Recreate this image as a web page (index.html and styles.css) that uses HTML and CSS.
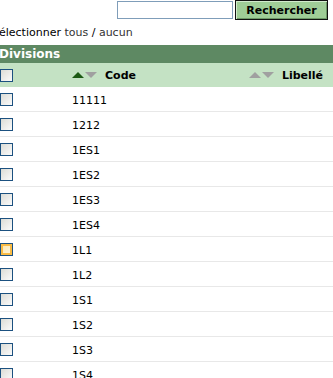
FILE: index.html
```html
<!DOCTYPE html>
<html lang="fr">
  <head>
    <meta charset="UTF-8" />
    <title>Divisions</title>
    <link rel="stylesheet" href="styles.css">
  </head>
  <body>
    <main class="page">
      <form class="search" autocomplete="off">
        <input type="text" class="search-input" name="q" />
        <button type="submit" class="search-btn">Rechercher</button>
      </form>
      <div class="select-links">Sélectionner <a href="#">tous</a> / <a href="#">aucun</a></div>
      <div class="grid-title">Divisions</div>
      <table class="grid">
        <thead>
          <tr>
            <th class="col-check"><span class="box"></span></th>
            <th class="col-code"><span class="sort"><i class="up on"></i><i class="down"></i></span>Code</th>
            <th class="col-label"><span class="sort"><i class="up"></i><i class="down"></i></span>Libellé</th>
          </tr>
        </thead>
        <tbody>
          <tr><td class="col-check"><span class="box"></span></td><td class="col-code">11111</td><td class="col-label"></td></tr>
          <tr><td class="col-check"><span class="box"></span></td><td class="col-code">1212</td><td class="col-label"></td></tr>
          <tr><td class="col-check"><span class="box"></span></td><td class="col-code">1ES1</td><td class="col-label"></td></tr>
          <tr><td class="col-check"><span class="box"></span></td><td class="col-code">1ES2</td><td class="col-label"></td></tr>
          <tr><td class="col-check"><span class="box"></span></td><td class="col-code">1ES3</td><td class="col-label"></td></tr>
          <tr><td class="col-check"><span class="box"></span></td><td class="col-code">1ES4</td><td class="col-label"></td></tr>
          <tr><td class="col-check"><span class="box hover"></span></td><td class="col-code">1L1</td><td class="col-label"></td></tr>
          <tr><td class="col-check"><span class="box"></span></td><td class="col-code">1L2</td><td class="col-label"></td></tr>
          <tr><td class="col-check"><span class="box"></span></td><td class="col-code">1S1</td><td class="col-label"></td></tr>
          <tr><td class="col-check"><span class="box"></span></td><td class="col-code">1S2</td><td class="col-label"></td></tr>
          <tr><td class="col-check"><span class="box"></span></td><td class="col-code">1S3</td><td class="col-label"></td></tr>
          <tr><td class="col-check"><span class="box"></span></td><td class="col-code">1S4</td><td class="col-label"></td></tr>
        </tbody>
      </table>
    </main>
  </body>
</html>
```

FILE: styles.css
```css
body {
  margin: 0;
  padding: 0;
  font-family: "DejaVu Sans", Verdana, sans-serif;
  font-size: 11px;
  color: #000;
  background-color: #fff;
  overflow: hidden;
}

.page {
  margin-left: -8px;
  width: 349px;
}

.search {
  display: flex;
  justify-content: flex-end;
  align-items: flex-start;
  gap: 2px;
  padding-right: 13px;
  height: 20px;
}

.search-input {
  box-sizing: border-box;
  width: 116px;
  height: 18px;
  margin: 1px 0 0;
  padding: 1px 3px;
  border: 1px solid #7f9db9;
  font: inherit;
}

.search-btn {
  box-sizing: border-box;
  width: 93px;
  height: 20px;
  margin: 0;
  padding: 0;
  border: 1px solid #111;
  background-color: #9fcd97;
  box-shadow: inset 1px 1px 0 #d2ebcd, inset -1px -1px 0 #6d9867;
  font: bold 11px "DejaVu Sans", Verdana, sans-serif;
  color: #000;
  cursor: pointer;
}

.select-links {
  height: 14px;
  margin-top: 6px;
  line-height: 14px;
}

.select-links a {
  color: #333;
  text-decoration: none;
}

.grid-title {
  margin-top: 5px;
  margin-left: 6px;
  height: 18px;
  line-height: 18px;
  padding-left: 1px;
  background-color: #5e8963;
  color: #fff;
  font-weight: bold;
  font-size: 12px;
}

.grid {
  margin-left: 6px;
  width: 343px;
  border-collapse: collapse;
}

.grid th {
  height: 24px;
  padding: 0;
  background-color: #c4e2c4;
  font-weight: bold;
  vertical-align: middle;
}

.grid td {
  height: 24px;
  padding: 0;
  border-bottom: 1px solid #e8e8e8;
  vertical-align: middle;
}

.grid .col-check {
  width: 72px;
  padding-left: 2px;
  text-align: left;
}

.col-code {
  width: 110px;
  text-align: left;
}

.grid td.col-code {
  height: 22px;
  padding-top: 2px;
}

.grid .col-label {
  text-align: right;
  padding-right: 18px;
}

.box {
  display: block;
  box-sizing: border-box;
  width: 13px;
  height: 13px;
  border: 1px solid #1c5180;
  background: linear-gradient(135deg, #dcdcd6, #fbfbfb);
}

.box.hover {
  box-shadow: inset 0 0 0 2px #f9bb45;
  background: linear-gradient(135deg, #fbe6a9, #fef7e4);
}

.sort {
  display: inline-flex;
  gap: 1px;
  margin-right: 8px;
  vertical-align: 1px;
}

.sort i {
  display: block;
  width: 0;
  height: 0;
  border-left: 6px solid transparent;
  border-right: 6px solid transparent;
}

.sort .up {
  border-bottom: 6px solid #a0a0a0;
}

.sort .up.on {
  border-bottom-color: #1c5a14;
}

.sort .down {
  border-top: 6px solid #a0a0a0;
}
```
